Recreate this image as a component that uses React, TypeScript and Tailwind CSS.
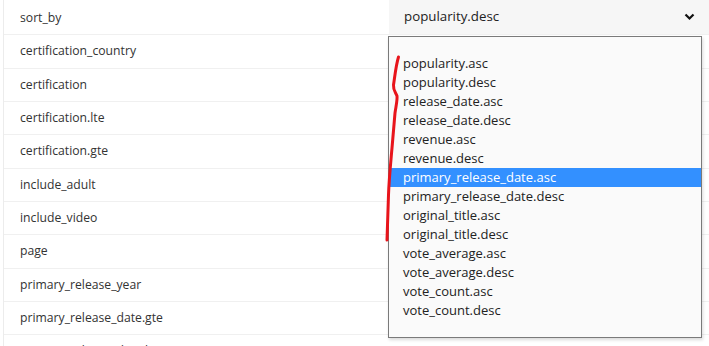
import React from "react";

const labels = [
  "sort_by",
  "certification_country",
  "certification",
  "certification.lte",
  "certification.gte",
  "include_adult",
  "include_video",
  "page",
  "primary_release_year",
  "primary_release_date.gte",
  "primary_release_date.lte",
];

const options = [
  "popularity.asc",
  "popularity.desc",
  "release_date.asc",
  "release_date.desc",
  "revenue.asc",
  "revenue.desc",
  "primary_release_date.asc",
  "primary_release_date.desc",
  "original_title.asc",
  "original_title.desc",
  "vote_average.asc",
  "vote_average.desc",
  "vote_count.asc",
  "vote_count.desc",
];

export default function App() {
  return (
    <div
      className="relative w-[709px] h-[346px] overflow-hidden bg-white text-[#333]"
      style={{ fontFamily: '"Open Sans", "Noto Sans", sans-serif' }}
    >
      <div className="ml-[3px] border-l border-[#ececec] pt-[2px]">
        {labels.map((l, i) => (
          <div key={l} className="flex h-[33.33px] border-b border-[#f0f0f0]">
            <div className="w-[385px] pl-[16px] flex items-center text-[12.2px]">{l}</div>
            {i === 0 ? (
              <div className="flex-1 -mt-[2px] bg-[#f6f6f6] flex items-center pl-[15px] pr-[14px] text-[13.3px] text-[#222]">
                <span className="flex-1">popularity.desc</span>
                <svg width="11" height="8" viewBox="0 0 11 8">
                  <path d="M1.5 1.5 L5.5 5.5 L9.5 1.5" fill="none" stroke="#111" strokeWidth="2.2" />
                </svg>
              </div>
            ) : (
              <div className="flex-1" />
            )}
          </div>
        ))}
      </div>

      <div className="absolute left-[388px] top-[36px] w-[314px] h-[302px] border border-[#7a7a7a] bg-[#fafafa] shadow-[1px_2px_3px_rgba(0,0,0,0.15)] pt-[17px]">
        {options.map((o) => (
          <div
            key={o}
            className={
              "h-[19px] flex items-center pl-[14px] text-[13px] " +
              (o === "primary_release_date.asc" ? "bg-[#3390ff] text-white" : "text-[#222]")
            }
          >
            {o}
          </div>
        ))}
      </div>

      <svg className="absolute left-0 top-0 pointer-events-none" width="709" height="346">
        <path
          d="M398.5 57 C396 65 395 75 393.5 85 C393 90 396 93 397 96 C397.5 100 396 106 395 113 C394 125 393 137 392 148 C390.5 165 389 180 388.5 195 C388 210 387.5 225 387 240"
          fill="none"
          stroke="#e8141b"
          strokeWidth="3"
          strokeLinecap="round"
        />
      </svg>
    </div>
  );
}
